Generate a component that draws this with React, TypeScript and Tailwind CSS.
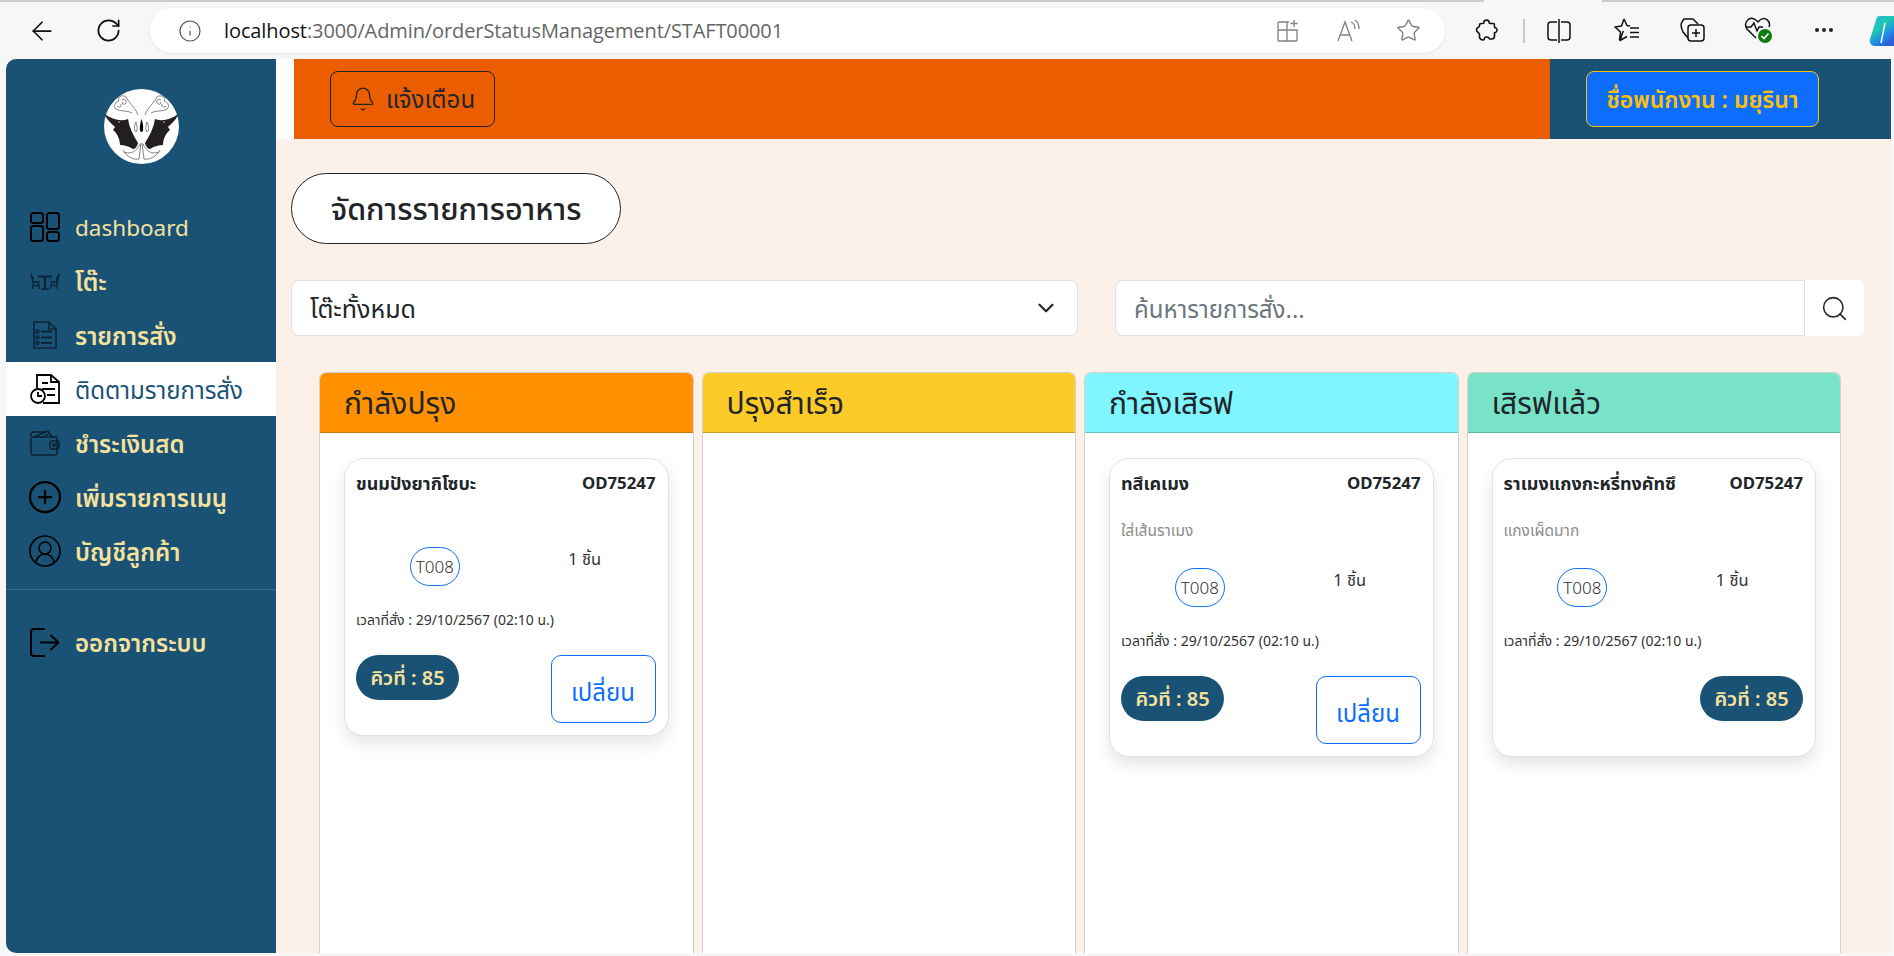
import { ArrowLeft, RotateCw, Info, Star, Bell, ChevronDown, Search, CirclePlus, CircleUserRound, MoreHorizontal } from "lucide-react";

const font = { fontFamily: '"Noto Sans", "Noto Sans Thai", sans-serif' };

const navItems = [
  { label: "dashboard", icon: "d" },
  { label: "โต๊ะ", icon: "t" },
  { label: "รายการสั่ง", icon: "l" },
  { label: "ติดตามรายการสั่ง", icon: "f", active: true },
  { label: "ชำระเงินสด", icon: "w" },
  { label: "เพิ่มรายการเมนู", icon: "p" },
  { label: "บัญชีลูกค้า", icon: "u" },
];

function Logo() {
  return (
    <svg viewBox="0 0 75 75" className="w-[75px] h-[75px]">
      <circle cx="37.5" cy="37.5" r="37.5" fill="#fff" />
      <path d="M0.5 25 C8 30 16 33 24 30 C25 38 29 46 34 54 C33 58 31 60 29 60 C24 57 20 56 16 56 C16 50 13 44 9 41 L11 38 C7 34 3 31 0.5 25Z" fill="#231f20" />
      <path d="M74.5 25 C67 30 59 33 51 30 C50 38 46 46 41 54 C42 58 44 60 46 60 C51 57 55 56 59 56 C59 50 62 44 66 41 L64 38 C68 34 72 31 74.5 25Z" fill="#231f20" />
      <path d="M37.5 30 C35.5 36 35 43 37.5 43 C40 43 39.5 36 37.5 30Z" fill="#000" />
      <g fill="none" stroke="#231f20" strokeWidth="0.55">
        <path d="M32 43 C29 41 31 35 32 33 C33 36 34 41 32 43Z" />
        <path d="M43 43 C46 41 44 35 43 33 C42 36 41 41 43 43Z" />
        <path d="M34 26 C31 18 25 14 22 8 C18 5 13 8 15 12 C11 13 9 17 12 20 C16 23 24 21 28 24" />
        <path d="M41 26 C44 18 50 14 53 8 C57 5 62 8 60 12 C64 13 66 17 63 20 C59 23 51 21 47 24" />
        <path d="M18 11 C21 9 24 12 21 15 C19 16 17 14 19 13" />
        <path d="M57 11 C54 9 51 12 54 15 C56 16 58 14 56 13" />
        <path d="M13 17 C15 19 18 18 17 15" />
        <path d="M62 17 C60 19 57 18 58 15" />
        <path d="M37 54 L35 70 M38 54 L40 70 M36 55 C33 62 27 66 20 63 M39 55 C42 62 48 66 55 63" />
        <path d="M35 70 C29 71 23 68 19 61 M40 70 C46 71 52 68 56 61" />
      </g>
      <circle cx="15" cy="33" r="0.7" fill="#fff" />
      <circle cx="60" cy="33" r="0.7" fill="#fff" />
    </svg>
  );
}

function NavIcon({ kind }: { kind: string }) {
  if (kind === "d")
    return (
      <svg viewBox="0 0 30 30" className="w-[30px] h-[30px]" fill="none" stroke="#000" strokeWidth="2">
        <rect x="1" y="1" width="12" height="10" rx="2.5" />
        <rect x="1" y="14" width="12" height="15" rx="2.5" />
        <rect x="17" y="1" width="12" height="16" rx="2.5" />
        <rect x="17" y="20" width="12" height="9" rx="2.5" />
      </svg>
    );
  if (kind === "t")
    return (
      <svg viewBox="0 0 30 18" className="w-[30px] h-[18px]" fill="none" stroke="#0b2438" strokeWidth="1.3">
        <path d="M1 1 L2.5 10 H9.5 M1.5 5 H3 V10 M3.5 10 L2.5 17 M8.5 10 L9.5 17 M3 13.5 H9" />
        <path d="M29 1 L27.5 10 H20.5 M28.5 5 H27 V10 M26.5 10 L27.5 17 M21.5 10 L20.5 17 M27 13.5 H21" />
        <path d="M8 4.5 H22" strokeWidth="2" />
        <path d="M15 5 V16" strokeWidth="2.4" />
        <path d="M11 17 H19" strokeWidth="1.6" />
      </svg>
    );
  if (kind === "l")
    return (
      <svg viewBox="0 0 24 28" className="w-[24px] h-[28px]" fill="none" stroke="#0b2438" strokeWidth="1.6">
        <path d="M1 1 H16 L23 8 V27 H1Z M16 1 L16 8 H23" />
        <path d="M8 10.5 H19 M8 16.5 H19 M8 22 H19" strokeWidth="1.8" />
        <circle cx="4.5" cy="10.5" r="1.4" />
        <circle cx="4.5" cy="16.5" r="1.4" />
        <circle cx="4.5" cy="22" r="1.4" />
      </svg>
    );
  if (kind === "f")
    return (
      <svg viewBox="0 0 30 30" className="w-[30px] h-[30px]" fill="none" stroke="#000" strokeWidth="1.8">
        <path d="M7 14 V1 H21 L29 8 V29 H13" />
        <path d="M21 1 V8 H29 M12 9 H18 M12 15 H25 M17 21 H25" />
        <circle cx="8" cy="22" r="7" fill="#fff" />
        <path d="M8 18 V22 H12" />
      </svg>
    );
  if (kind === "w")
    return (
      <svg viewBox="0 0 30 26" className="w-[30px] h-[26px]" fill="none" stroke="#0b1f30" strokeWidth="1.4">
        <path d="M1 8 V23 A2 2 0 0 0 3 25 H25 A2 2 0 0 0 27 23 V8 A1 1 0 0 0 26 7 H3 A2 2 0 0 1 1 5 V4 A2 2 0 0 1 3 2 H15" />
        <path d="M4 7 L18 1 L22 7 M13 7 L20 3" />
        <rect x="20" y="11" width="9" height="8" rx="2.5" />
        <circle cx="24" cy="15" r="1.4" />
      </svg>
    );
  if (kind === "p") return <CirclePlus size={36} strokeWidth={1.5} className="text-black -m-[3px]" />;
  if (kind === "u") return <CircleUserRound size={36} strokeWidth={1.1} className="text-black -m-[3px]" />;
  return null;
}

function Card({ title, note, button = true, queueRight = false }: { title: string; note?: string; button?: boolean; queueRight?: boolean }) {
  return (
    <div className="mx-[24px] mt-[25px] rounded-[20px] border border-[#dee2e6] bg-white pl-[11px] pr-[12px] pt-[9px] shadow-[0_8px_16px_rgba(0,0,0,0.1)]">
      <div className="flex justify-between items-center h-[30px] text-[#212529] text-[16.8px] font-bold">
        <span className="text-[18px] whitespace-nowrap">{title}</span>
        <span>OD75247</span>
      </div>
      <div className={note ? "h-[34px] mt-[16px] flex items-center text-[15.5px] text-[#8c8c8c]" : "h-[20px] mt-[9px]"}>{note}</div>
      <div className="grid grid-cols-2 mt-[20px] h-[39px]">
        <div className="flex justify-center pl-2">
          <span className="w-[50px] h-[39px] rounded-[20px] border border-[#0d6efd] flex items-center justify-center text-[17px] font-light text-[#333]">T008</span>
        </div>
        <div className="text-center text-[16.5px] text-[#333] pl-2">1 ชิ้น</div>
      </div>
      <div className="mt-[22px] text-[14px] text-[#333] h-[22px] flex items-center">เวลาที่สั่ง : 29/10/2567 (02:10 น.)</div>
      <div className={`flex mt-[25px] mb-[12px] items-start justify-between min-h-[68px] ${queueRight ? "flex-row-reverse" : ""}`}>
        <span className="w-[103px] h-[45px] rounded-full bg-[#1a5276] text-[#f5e19c] text-[20px] font-semibold flex items-center justify-center">คิวที่ : 85</span>
        {button && <span className="w-[105px] h-[68px] rounded-[10px] border border-[#0d6efd] text-[#0d6efd] text-[24px] flex items-center justify-center pt-[5px]">เปลี่ยน</span>}
      </div>
    </div>
  );
}

function Column({ title, color, line, children }: { title: string; color: string; line: string; children?: React.ReactNode }) {
  return (
    <div className="rounded-t-[7px] border border-b-0 border-[#d5d0cc] bg-white overflow-hidden flex flex-col">
      <div className={`h-[60px] shrink-0 border-b flex items-center pl-[24px] text-[30px] text-[#212529] ${color} ${line}`}>{title}</div>
      {children}
    </div>
  );
}

export default function App() {
  return (
    <div className="w-[1894px] h-[956px] overflow-hidden flex flex-col bg-[#f7f7f7]" style={font}>
      {/* browser toolbar */}
      <div className="h-[59px] shrink-0 relative flex flex-col">
        <div className="h-[2px] bg-[#cccccc] flex justify-end shrink-0">
          <div className="w-[118px] h-full bg-[#f7f7f7] mr-[292px]" />
        </div>
        <div className="flex-1 flex items-center">
          <ArrowLeft size={30} strokeWidth={1.4} className="ml-[27px] text-[#111]" />
          <RotateCw size={27} strokeWidth={1.5} className="ml-[38px] text-[#111]" />
          <div className="ml-[28px] w-[1295px] h-[45px] rounded-[23px] bg-white shadow-[0_1px_3px_rgba(0,0,0,0.08)] flex items-center">
            <Info size={24} strokeWidth={1.2} className="ml-[28px] text-[#555]" />
            <span className="ml-[22px] text-[20px] text-[#111] tracking-[-0.1px]" style={{ fontFamily: '"Open Sans", sans-serif' }}>
              localhost<span className="text-[#666]">:3000/Admin/orderStatusManagement/STAFT00001</span>
            </span>
            <div className="ml-auto flex items-center gap-[36px] mr-[24px] text-[#808080]">
              <svg viewBox="0 0 24 24" className="w-[24px] h-[24px]" fill="none" stroke="currentColor" strokeWidth="1.3">
                <path d="M13 3 H3 a1 1 0 0 0 -1 1 V21 a1 1 0 0 0 1 1 H20 a1 1 0 0 0 1 -1 V11 H2 M11 3 V22" />
                <path d="M18 1 V8 M14.5 4.5 H21.5" />
              </svg>
              <svg viewBox="0 0 24 24" className="w-[24px] h-[24px]" fill="none" stroke="currentColor" strokeWidth="1.3">
                <path d="M2 22 L9 3 L16 22 M4.5 16 H13.5" />
                <path d="M15 3 C18 4 19 7 19 10 M19 1 C22 3 23 7 23 10" />
              </svg>
              <Star size={25} strokeWidth={1.3} />
            </div>
          </div>
          <svg viewBox="0 0 24 24" className="absolute left-[1475px] top-[18px] w-[24px] h-[24px]" fill="none" stroke="#111" strokeWidth="1.6" strokeLinejoin="round">
            <path d="M9 4 C9 1.5 14 1.5 14 4 C14 5 15 5.5 16 5.5 H18 C19 5.5 19.5 6 19.5 7 V9 C19.5 10 21 10 21.5 10.5 C23 12 21.5 15 19.5 14.5 V18 C19.5 20 18.5 21 17 21 H15 C14 21 14 20 13.5 19.5 C12 18.5 9.5 19 9.5 20.5 C9.5 21 9 22 8 22 C6 22 5 21 4.5 19.5 V16.5 C4.5 15.5 3.5 15 3 14.5 C1 13 1 10.5 3 9.5 C3.5 9 4.5 9 4.5 8 V7 C4.5 6 5.5 5.5 6.5 5.5 H8 C8.5 5.5 9 5 9 4Z" />
          </svg>
          <div className="absolute left-[1523px] top-[19px] w-[2px] h-[24px] bg-[#c8c8c8]" />
          <svg viewBox="0 0 26 26" className="absolute left-[1546px] top-[18px] w-[26px] h-[26px]" fill="none" stroke="#111" strokeWidth="1.5">
            <path d="M11 4 H5 A3 3 0 0 0 2 7 V19 A3 3 0 0 0 5 22 H11" />
            <path d="M15 4 H21 A3 3 0 0 1 24 7 V19 A3 3 0 0 1 21 22 H15" />
            <path d="M13 1 V25" />
          </svg>
          <svg viewBox="0 0 26 26" className="absolute left-[1614px] top-[17px] w-[26px] h-[26px]" fill="none" stroke="#111" strokeWidth="1.5" strokeLinejoin="round">
            <path d="M10 2 L13 8.5 L16 9 M9.5 14 L8.5 16 L6 23.5 L13 19.5 M5.5 23 L6.5 15 L1 10 L7.5 9 L10 2" />
            <path d="M16 11 H25 M16 15.5 H25 M16 20 H25" />
          </svg>
          <svg viewBox="0 0 26 26" className="absolute left-[1680px] top-[17px] w-[26px] h-[26px]" fill="none" stroke="#111" strokeWidth="1.5">
            <path d="M8 21 L3 15 C1 11 0 8 2 5 L4 2 H13 L18 7" />
            <rect x="8" y="8" width="16" height="16" rx="3" />
            <path d="M16 12 V20 M12 16 H20" />
          </svg>
          <svg viewBox="0 0 28 28" className="absolute left-[1744px] top-[15px] w-[28px] h-[28px]" fill="none" stroke="#111" strokeWidth="1.5">
            <path d="M12 23 L3 14 C-1 8 5 0 12 5 L14 7 L16 5 C22 1 27 7 25 12" />
            <path d="M2 12 H7 L10 8 L13 16 L15 12 H19" />
            <circle cx="21" cy="21" r="7" fill="#107c10" stroke="none" />
            <path d="M17.5 21 L20 23.5 L24.5 18.5" stroke="#fff" strokeWidth="1.6" />
          </svg>
          <MoreHorizontal size={24} strokeWidth={2} className="absolute left-[1812px] top-[18px] text-[#222]" />
          <svg viewBox="0 0 25 31" className="absolute left-[1869px] top-[16px] w-[25px] h-[31px]">
            <defs>
              <linearGradient id="cp" x1="0" y1="0" x2="0.6" y2="1">
                <stop offset="0" stopColor="#2bb7e8" />
                <stop offset="0.45" stopColor="#1fc8b0" />
                <stop offset="0.75" stopColor="#1e90e8" />
                <stop offset="1" stopColor="#2f5fd8" />
              </linearGradient>
            </defs>
            <path d="M8 1 C9 0.3 10 0 11 0 H25 V30 H6 C2 30 0 27 1 23Z" fill="url(#cp)" />
            <path d="M16 7 L12 27" stroke="#eaf6ff" strokeWidth="1.6" />
          </svg>
        </div>
      </div>

      {/* page */}
      <div className="flex-1 min-h-0 flex pl-[6px] pr-[3px] pb-[3px]">
        <aside className="w-[270px] shrink-0 bg-[#1a5276] rounded-l-[10px] flex flex-col">
          <div className="flex justify-center pt-[30px] pl-[1px]">
            <Logo />
          </div>
          <nav className="mt-[36px] flex flex-col">
            {navItems.map((n) => (
              <div key={n.label} className={`h-[54px] flex items-center text-[24px] ${n.active ? "bg-white text-[#1a5276] font-normal" : "text-[#f5e19c] font-semibold"}`}>
                <span className="w-[30px] ml-[24px] mr-[15px] flex justify-center items-center">
                  <NavIcon kind={n.icon} />
                </span>
                <span className={n.label === "dashboard" ? "font-normal text-[22.5px] pt-[1px]" : "pt-[1px]"}>{n.label}</span>
              </div>
            ))}
          </nav>
          <div className="h-px bg-white/15 mt-[11px]" />
          <div className="mt-[25px] h-[54px] flex items-center text-[24px] font-semibold text-[#f5e19c]">
            <span className="w-[30px] ml-[24px] mr-[15px] flex justify-center">
              <svg viewBox="0 0 30 29" className="w-[30px] h-[29px]" fill="none" stroke="#000" strokeWidth="2" strokeLinecap="round" strokeLinejoin="round">
                <path d="M14 1 H4 A3 3 0 0 0 1 4 V25 A3 3 0 0 0 4 28 H14" />
                <path d="M11 14.5 H28 M21 7.5 L28.5 14.5 L21 21.5" />
              </svg>
            </span>
            <span className="pt-[1px]">ออกจากระบบ</span>
          </div>
        </aside>

        <main className="flex-1 min-w-0 flex flex-col bg-[#fcf1e8]">
          <div className="h-[80px] shrink-0 flex bg-white">
            <div className="w-[18px] shrink-0" />
            <div className="flex-1 bg-[#eb5e00] flex items-center pl-[36px]">
              <div className="w-[165px] h-[56px] rounded-[8px] border border-[#212529] flex items-center justify-center gap-[10px] text-[24px] text-[#212529]">
                <Bell size={26} strokeWidth={1.2} />
                แจ้งเตือน
              </div>
            </div>
            <div className="w-[341px] shrink-0 bg-[#1a5276] flex items-center pl-[36px]">
              <div className="w-[233px] h-[56px] rounded-[8px] border border-[#ffc107] bg-[#0d6efd] flex items-center justify-center text-[23px] font-semibold text-[#ffc107]">
                ชื่อพนักงาน : มยุรินา
              </div>
            </div>
          </div>

          <div className="flex-1 min-h-0 pl-[15px] pr-[27px] flex flex-col">
            <div className="mt-[34px] w-[330px] h-[71px] rounded-[36px] border border-[#212529] bg-white flex items-center justify-center text-[30.5px] font-medium text-[#212529]">
              จัดการรายการอาหาร
            </div>
            <div className="mt-[36px] flex gap-[37px]">
              <div className="w-[787px] h-[56px] rounded-[8px] border border-[#dee2e6] bg-white flex items-center justify-between pl-[18px] pr-[18px] text-[25px] text-[#212529]">
                <span className="pt-[1px]">โต๊ะทั้งหมด</span>
                <ChevronDown size={26} strokeWidth={2} />
              </div>
              <div className="flex-1 flex h-[56px]">
                <div className="flex-1 rounded-l-[8px] border border-[#dee2e6] bg-white flex items-center pl-[18px] text-[24px] text-[#6c757d]">
                  <span className="pt-[1px]">ค้นหารายการสั่ง...</span>
                </div>
                <div className="w-[59px] rounded-r-[8px] bg-white flex items-center justify-center">
                  <Search size={29} strokeWidth={1.3} className="text-[#212529]" />
                </div>
              </div>
            </div>
            <div className="mt-[36px] ml-[28px] mr-[23px] flex-1 min-h-0 grid grid-cols-4 gap-[8px]">
              <Column title="กำลังปรุง" color="bg-[#ff9100]" line="border-[#c77a10]">
                <Card title="ขนมปังยากิโซบะ" />
              </Column>
              <Column title="ปรุงสำเร็จ" color="bg-[#fdcb28]" line="border-[#c9a226]" />
              <Column title="กำลังเสิรฟ" color="bg-[#7ff6ff]" line="border-[#62c9c9]">
                <Card title="ทสึเคเมง" note="ใส่เส้นราเมง" />
              </Column>
              <Column title="เสิรฟแล้ว" color="bg-[#78e3c8]" line="border-[#5cb8a0]">
                <Card title="ราเมงแกงกะหรี่ทงคัทซึ" note="แกงเผ็ดมาก" button={false} queueRight />
              </Column>
            </div>
          </div>
        </main>
      </div>
    </div>
  );
}
